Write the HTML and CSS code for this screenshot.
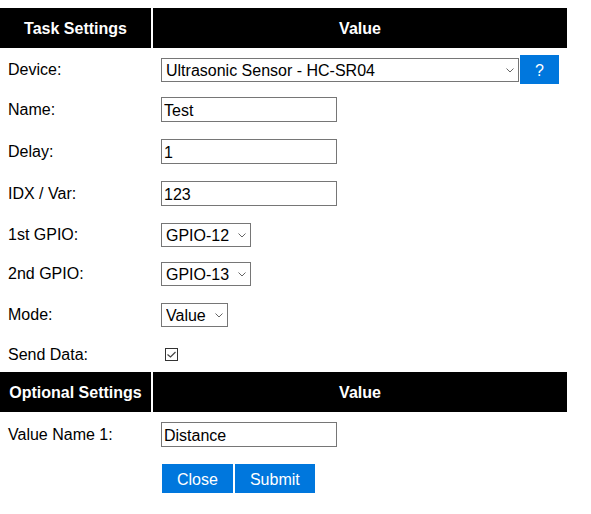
FILE: index.html
```html
<!DOCTYPE html>
<html lang="en">
<head>
<meta charset="utf-8">
<title>Task Settings</title>
<link rel="stylesheet" href="styles.css">
</head>
<body>
<form class="page">
<table class="settings">
  <colgroup><col class="col-key"><col class="col-val"></colgroup>
  <tr class="head"><th class="key">Task Settings</th><th>Value</th></tr>
  <tr class="r-device">
    <td class="label">Device:</td>
    <td class="field">
      <div class="ctrl">
        <span class="select-wrap w-device">
          <select class="select"><option>Ultrasonic Sensor - HC-SR04</option></select>
          <svg class="chev" width="8" height="5" viewBox="0 0 8 5"><polyline points="0.5,0.5 4,4 7.5,0.5" fill="none" stroke="#666" stroke-width="1"/></svg>
        </span>
        <a class="button help">?</a>
      </div>
    </td>
  </tr>
  <tr class="r-text"><td class="label">Name:</td><td class="field"><input class="text" type="text" value="Test"></td></tr>
  <tr class="r-text"><td class="label">Delay:</td><td class="field"><input class="text" type="text" value="1"></td></tr>
  <tr class="r-text"><td class="label">IDX / Var:</td><td class="field"><input class="text" type="text" value="123"></td></tr>
  <tr class="r-gpio1">
    <td class="label">1st GPIO:</td>
    <td class="field">
      <span class="select-wrap w-gpio">
        <select class="select"><option>GPIO-12</option></select>
        <svg class="chev" width="8" height="5" viewBox="0 0 8 5"><polyline points="0.5,0.5 4,4 7.5,0.5" fill="none" stroke="#666" stroke-width="1"/></svg>
      </span>
    </td>
  </tr>
  <tr class="r-gpio2">
    <td class="label">2nd GPIO:</td>
    <td class="field">
      <span class="select-wrap w-gpio">
        <select class="select"><option>GPIO-13</option></select>
        <svg class="chev" width="8" height="5" viewBox="0 0 8 5"><polyline points="0.5,0.5 4,4 7.5,0.5" fill="none" stroke="#666" stroke-width="1"/></svg>
      </span>
    </td>
  </tr>
  <tr class="r-mode">
    <td class="label">Mode:</td>
    <td class="field">
      <span class="select-wrap w-mode">
        <select class="select"><option>Value</option></select>
        <svg class="chev" width="8" height="5" viewBox="0 0 8 5"><polyline points="0.5,0.5 4,4 7.5,0.5" fill="none" stroke="#666" stroke-width="1"/></svg>
      </span>
    </td>
  </tr>
  <tr class="r-check">
    <td class="label">Send Data:</td>
    <td class="field">
      <span class="check-wrap">
        <input class="check" type="checkbox" checked>
        <svg class="tick" width="13" height="13" viewBox="0 0 13 13"><polyline points="2.5,6.5 5.5,9 10.5,4" fill="none" stroke="#444" stroke-width="1.2"/></svg>
      </span>
    </td>
  </tr>
  <tr class="head"><th class="key">Optional Settings</th><th>Value</th></tr>
  <tr class="r-vname"><td class="label">Value Name 1:</td><td class="field"><input class="text" type="text" value="Distance"></td></tr>
  <tr class="r-buttons">
    <td></td>
    <td class="field">
      <div class="actions">
        <a class="button">Close</a>
        <a class="button">Submit</a>
      </div>
    </td>
  </tr>
</table>
</form>
</body>
</html>
```

FILE: styles.css
```css
html, body {
  margin: 0;
  padding: 0;
  background: #fff;
}
body {
  font-family: "Liberation Sans", Arial, sans-serif;
  font-size: 16px;
  color: #000;
}
.page {
  padding-top: 8px;
}
.settings {
  border-collapse: separate;
  border-spacing: 0;
  table-layout: fixed;
  width: 567px;
}
.col-key { width: 153px; }
.col-val { width: 414px; }

.head th {
  background: #000;
  color: #fff;
  font-weight: bold;
  font-size: 16px;
  height: 38px;
  padding: 2px 0 0;
  line-height: 20px;
  text-align: center;
  vertical-align: middle;
}
.head th.key {
  border-right: 2px solid #fff;
}

td {
  padding: 0;
  vertical-align: top;
}
td.label {
  padding-left: 8px;
  white-space: nowrap;
}
td.field {
  padding-left: 8px;
}

/* row geometry */
.r-device td { padding-top: 7px; padding-bottom: 5px; }
.r-device .label { line-height: 29px; }
.r-text td { padding-top: 8px; padding-bottom: 9px; }
.r-text .label, .r-vname .label { line-height: 25px; }
.r-gpio1 td { padding-top: 8px; padding-bottom: 7px; }
.r-gpio2 td { padding-top: 8px; padding-bottom: 9px; }
.r-mode td { padding-top: 8px; padding-bottom: 8px; }
.r-gpio1 .label, .r-gpio2 .label, .r-mode .label { line-height: 24px; }
.r-check td { padding-top: 8px; padding-bottom: 6px; }
.r-check .label { line-height: 23px; }
.r-vname td { padding-top: 10px; padding-bottom: 8px; }
.r-buttons td { padding-top: 9px; padding-bottom: 7px; }

.ctrl {
  display: flex;
  align-items: center;
  height: 29px;
}

.text {
  display: block;
  box-sizing: border-box;
  width: 176px;
  height: 25px;
  margin: 0;
  padding: 2px 2px 0;
  border: 1px solid #767676;
  border-radius: 0;
  font-family: "Liberation Sans", Arial, sans-serif;
  font-size: 16px;
  color: #000;
  background: #fff;
  outline: none;
}

.select-wrap {
  position: relative;
  display: block;
  height: 24px;
}
.w-device { width: 358px; }
.w-gpio { width: 90px; }
.w-mode { width: 67px; }
.select {
  -webkit-appearance: none;
  appearance: none;
  display: block;
  box-sizing: border-box;
  width: 100%;
  height: 24px;
  margin: 0;
  padding: 1px 18px 0 4px;
  border: 1px solid #767676;
  border-radius: 0;
  background: #fff;
  color: #000;
  font-family: "Liberation Sans", Arial, sans-serif;
  font-size: 16px;
  line-height: 21px;
  outline: none;
}
.chev {
  position: absolute;
  right: 5px;
  top: 10px;
  pointer-events: none;
}

.button {
  display: inline-block;
  padding: 6px 15px 4px;
  line-height: 19px;
  background: #07d;
  color: #fff;
  text-decoration: none;
  font-size: 16px;
}
.help {
  margin-left: 1px;
}
.actions {
  display: flex;
  gap: 2px;
  padding-left: 1px;
}

.check-wrap {
  position: relative;
  display: block;
  width: 13px;
  height: 13px;
  margin: 5px 0 0 4px;
}
.check {
  -webkit-appearance: none;
  appearance: none;
  display: block;
  box-sizing: border-box;
  width: 13px;
  height: 13px;
  margin: 0;
  border: 1px solid #333;
  border-radius: 0;
  background: #fff;
}
.tick {
  position: absolute;
  left: 0;
  top: 0;
  pointer-events: none;
}
```
